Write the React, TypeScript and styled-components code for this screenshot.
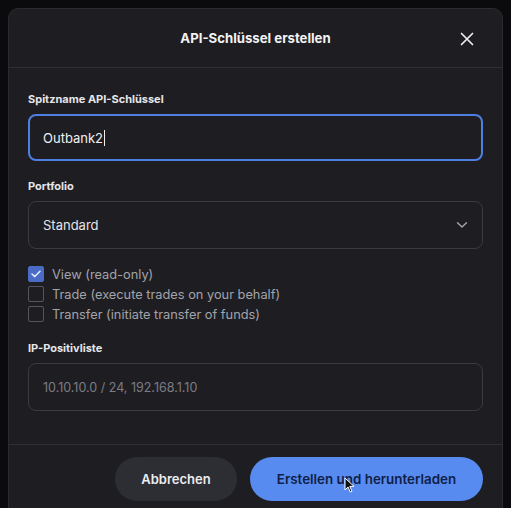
import React from "react";
import styled, { createGlobalStyle } from "styled-components";

const Global = createGlobalStyle`
  html, body {
    margin: 0;
    padding: 0;
    background: #0b0b0d;
    font-family: Inter, "Noto Sans", "Liberation Sans", sans-serif;
  }
  * { box-sizing: border-box; }
`;

const Backdrop = styled.div`
  width: 511px;
  height: 508px;
  overflow: hidden;
  padding: 8px 8px 0 8px;
  background: #0b0b0d;
`;

const Modal = styled.div`
  width: 495px;
  height: 520px;
  background: #1e1e22;
  border: 1px solid #2a2a2f;
  border-radius: 10px 10px 0 0;
  display: flex;
  flex-direction: column;
`;

const Header = styled.div`
  height: 59px;
  flex: none;
  display: flex;
  align-items: center;
  justify-content: center;
  position: relative;
  border-bottom: 1px solid #2f2f34;
`;

const Title = styled.h2`
  margin: 0;
  font-size: 13.2px;
  font-weight: 700;
  color: #f2f2f4;
`;

const Close = styled.button`
  position: absolute;
  right: 26px;
  top: 21px;
  width: 18px;
  height: 18px;
  padding: 0;
  border: none;
  background: none;
  display: flex;
  align-items: center;
  justify-content: center;
`;

const Body = styled.div`
  padding: 24px 19px 33px 19px;
  display: flex;
  flex-direction: column;
  border-bottom: 1px solid #2f2f34;
`;

const Label = styled.label<{ $top: number }>`
  display: block;
  margin-top: ${(p) => p.$top}px;
  margin-bottom: 8px;
  font-size: 11px;
  line-height: 14px;
  font-weight: 700;
  color: #e6e6ea;
`;

const Field = styled.div<{ $focus?: boolean }>`
  height: ${(p) => (p.$focus ? 47 : 48)}px;
  border-radius: 8px;
  border: ${(p) => (p.$focus ? "2px solid #4f7fe0" : "1px solid #3a3a40")};
  padding: 0 ${(p) => (p.$focus ? 13 : 14)}px;
  display: flex;
  align-items: center;
  font-size: 13px;
  color: ${(p) => (p.$focus ? "#f0f0f2" : "#e4e4e8")};
`;

const Placeholder = styled.span`
  color: #7c7c84;
  font-size: 12.5px;
`;

const Caret = styled.span`
  display: inline-block;
  width: 1px;
  height: 16px;
  background: #f0f0f2;
  margin-left: 1px;
`;

const Chevron = styled.span`
  margin-left: auto;
  display: flex;
  align-items: center;
`;

const Checks = styled.div`
  margin-top: 15px;
  display: flex;
  flex-direction: column;
`;

const CheckRow = styled.div`
  height: 20px;
  display: flex;
  align-items: center;
  gap: 8px;
  font-size: 12.8px;
  color: #a3a3ab;
`;

const Box = styled.span<{ $on?: boolean }>`
  width: 16px;
  height: 16px;
  flex: none;
  border-radius: 2px;
  border: 1.5px solid ${(p) => (p.$on ? "#4a6cc4" : "#55555c")};
  background: ${(p) => (p.$on ? "#4a6cc4" : "transparent")};
  display: flex;
  align-items: center;
  justify-content: center;
`;

const Footer = styled.div`
  padding: 12px 19px 0 0;
  display: flex;
  justify-content: flex-end;
  gap: 13px;
`;

const Button = styled.button<{ $primary?: boolean }>`
  height: 44px;
  border: none;
  border-radius: 22px;
  font-family: inherit;
  font-size: ${(p) => (p.$primary ? 13.4 : 13)}px;
  font-weight: 600;
  padding: 0;
  width: ${(p) => (p.$primary ? 233 : 122)}px;
  background: ${(p) => (p.$primary ? "#588bef" : "#2d2e33")};
  color: ${(p) => (p.$primary ? "#0f1f47" : "#ececef")};
  position: relative;
`;

const Pointer = styled.svg`
  position: absolute;
  left: 94px;
  top: 20px;
`;

const perms = [
  { text: "View (read-only)", on: true },
  { text: "Trade (execute trades on your behalf)", on: false },
  { text: "Transfer (initiate transfer of funds)", on: false },
];

export default function App() {
  return (
    <>
      <Global />
      <Backdrop>
        <Modal>
          <Header>
            <Title>API-Schlüssel erstellen</Title>
            <Close aria-label="Schließen">
              <svg width="14" height="14" viewBox="0 0 14 14">
                <path d="M1.5 1.5L12.5 12.5M12.5 1.5L1.5 12.5" stroke="#ededf0" strokeWidth="1.7" strokeLinecap="round" />
              </svg>
            </Close>
          </Header>
          <Body>
            <Label $top={0}>Spitzname API-Schlüssel</Label>
            <Field $focus>
              Outbank2
              <Caret />
            </Field>
            <Label $top={18}>Portfolio</Label>
            <Field>
              Standard
              <Chevron>
                <svg width="12" height="8" viewBox="0 0 12 8">
                  <path d="M1.5 1.8L6 6L10.5 1.8" stroke="#a5a5ac" strokeWidth="1.4" fill="none" strokeLinecap="round" strokeLinejoin="round" />
                </svg>
              </Chevron>
            </Field>
            <Checks>
              {perms.map((p) => (
                <CheckRow key={p.text}>
                  <Box $on={p.on}>
                    {p.on && (
                      <svg width="10" height="8" viewBox="0 0 10 8">
                        <path d="M1 4L3.8 6.6L9 1.2" stroke="#e6ecff" strokeWidth="1.5" fill="none" strokeLinecap="round" strokeLinejoin="round" />
                      </svg>
                    )}
                  </Box>
                  {p.text}
                </CheckRow>
              ))}
            </Checks>
            <Label $top={17}>IP-Positivliste</Label>
            <Field>
              <Placeholder>10.10.10.0 / 24, 192.168.1.10</Placeholder>
            </Field>
          </Body>
          <Footer>
            <Button>Abbrechen</Button>
            <Button $primary>
              Erstellen und herunterladen
              <Pointer width="11" height="16" viewBox="0 0 11 16">
                <path d="M1 1L1 13L4 10L6.2 15L8 14.2L5.8 9.4L10 9.4Z" fill="#111" stroke="#fff" strokeWidth="1" strokeLinejoin="round" />
              </Pointer>
            </Button>
          </Footer>
        </Modal>
      </Backdrop>
    </>
  );
}
